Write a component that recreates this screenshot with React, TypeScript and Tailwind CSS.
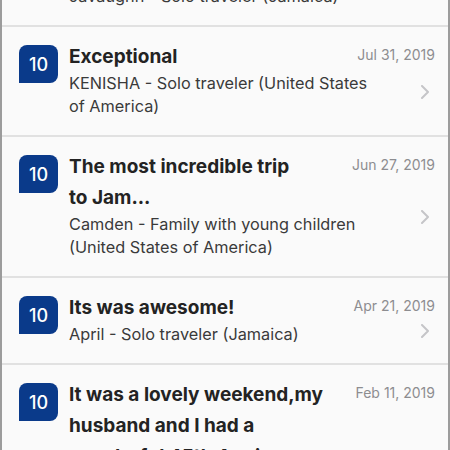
import React from 'react';

type Review = {
  score: number;
  title: React.ReactNode;
  author: string;
  date: string;
};

const reviews: Review[] = [
  { score: 10, title: 'Loved it', author: 'Javaughn - Solo traveler (Jamaica)', date: 'Aug 4, 2019' },
  { score: 10, title: 'Exceptional', author: 'KENISHA - Solo traveler (United States of America)', date: 'Jul 31, 2019' },
  {
    score: 10,
    title: (
      <>
        The most incredible trip
        <br />
        to Jam...
      </>
    ),
    author: 'Camden - Family with young children (United States of America)',
    date: 'Jun 27, 2019',
  },
  { score: 10, title: 'Its was awesome!', author: 'April - Solo traveler (Jamaica)', date: 'Apr 21, 2019' },
  {
    score: 10,
    title: 'It was a lovely weekend,my husband and I had a wonderful 45th Anniversary',
    author: 'Dawn - Couple (United States of America)',
    date: 'Feb 11, 2019',
  },
];

function Chevron() {
  return (
    <svg width="10" height="14" viewBox="0 0 10 14" fill="none">
      <polyline points="2,1 8,7 2,13" stroke="#c5c5c8" strokeWidth="2" strokeLinecap="round" strokeLinejoin="round" />
    </svg>
  );
}

function ReviewRow({ review }: { review: Review }) {
  return (
    <div className="flex border-b-2 border-[#e1e1e1] bg-[#fafafa] pl-[17px] pr-[13px] pt-[14px] pb-[17px]">
      {/* score badge */}
      <div className="mt-[4px] flex h-[38px] w-[39px] shrink-0 items-center justify-center rounded-t-[8px] rounded-br-[8px] bg-[#0a3a8a] text-[18px] font-medium text-white">
        {review.score}
      </div>

      <div className="ml-[11px] min-w-0 flex-1">
        <div className="pr-[75px] text-[19px] font-bold leading-[31px] text-[#232323]">{review.title}</div>
        <div className="pr-[36px] text-[16.3px] leading-[23px] text-[#3a3a3a]">{review.author}</div>
      </div>

      <div className="flex w-[20px] shrink-0 flex-col items-end">
        <div className="whitespace-nowrap pt-[4px] text-[14px] leading-[20px] text-[#8d8d90]">{review.date}</div>
        <div className="flex flex-1 items-center pr-[5px]">
          <Chevron />
        </div>
      </div>
    </div>
  );
}

export default function App() {
  return (
    <div className="h-[450px] w-[450px] overflow-hidden bg-white font-['Inter','Liberation_Sans',sans-serif]">
      <div className="-mt-[60px] border-x-2 border-[#9c9c9c]">
        {reviews.map((review, index) => (
          <ReviewRow key={index} review={review} />
        ))}
      </div>
    </div>
  );
}
